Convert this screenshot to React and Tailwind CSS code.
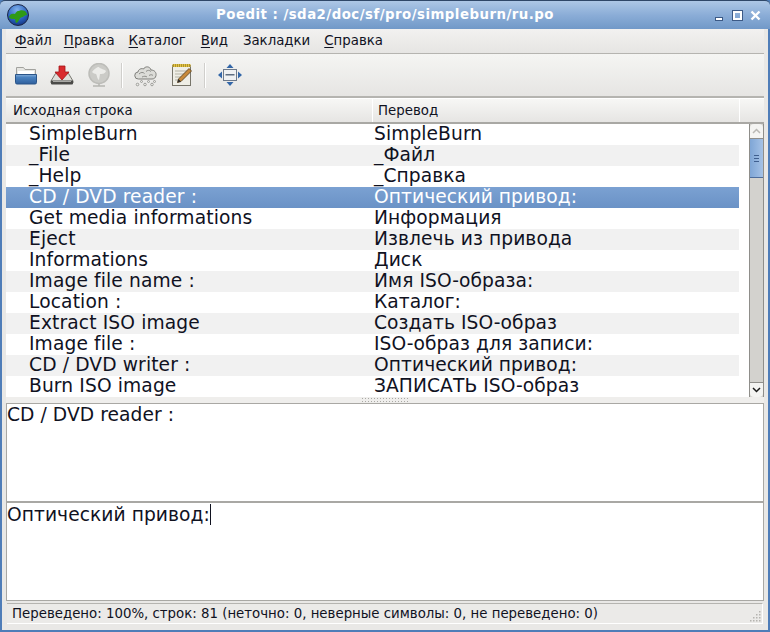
import React from 'react';

const rows = [
  ['SimpleBurn', 'SimpleBurn'],
  ['_File', '_Файл'],
  ['_Help', '_Справка'],
  ['CD / DVD reader :', 'Оптический привод:'],
  ['Get media informations', 'Информация'],
  ['Eject', 'Извлечь из привода'],
  ['Informations', 'Диск'],
  ['Image file name :', 'Имя ISO-образа:'],
  ['Location :', 'Каталог:'],
  ['Extract ISO image', 'Создать ISO-образ'],
  ['Image file :', 'ISO-образ для записи:'],
  ['CD / DVD writer :', 'Оптический привод:'],
  ['Burn ISO image', 'ЗАПИСАТЬ ISO-образ'],
];

const menus = [
  ['Ф', 'айл', ''],
  ['П', 'равка', 'ml-[12px]'],
  ['К', 'аталог', 'ml-[14px]'],
  ['В', 'ид', 'ml-[15px]'],
  ['', 'Закладки', 'ml-[15px]'],
  ['С', 'правка', 'ml-[14px]'],
];

const Globe = () => (
  <svg width="24" height="24" viewBox="0 0 24 24">
    <defs>
      <radialGradient id="sea" cx="45%" cy="25%" r="80%">
        <stop offset="0" stopColor="#7fb0ea" />
        <stop offset="0.6" stopColor="#2a62c0" />
        <stop offset="1" stopColor="#122f78" />
      </radialGradient>
    </defs>
    <circle cx="12" cy="12" r="10.500" fill="url(#sea)" stroke="#1b2748" />
    <path d="M3 14c1-3 3-4 6-3 1-1 1-3 4-3 1-1 4-1 6 0 1 1 2 2 2 4-2 0-3 1-4 2-2 0-3 1-4 3-1 2-2 3-3 3-1-2 0-4-2-4-2 0-4 0-5-2z" fill="#2f9a16" />
  </svg>
);

const FolderIcon = () => (
  <svg width="24" height="24" viewBox="0 0 24 24">
    <defs>
      <linearGradient id="fold" x1="0" y1="0" x2="0" y2="1">
        <stop offset="0" stopColor="#86aed8" />
        <stop offset="0.3" stopColor="#4a82c0" />
        <stop offset="1" stopColor="#2f5f9c" />
      </linearGradient>
    </defs>
    <path d="M2.500 4.500h7l1.500 2h10.500v6h-19z" fill="#e6e6e2" stroke="#a2a29e" />
    <rect x="4" y="8" width="16" height="4" fill="#ffffff" />
    <path d="M1.500 11.500h21v8a1.500 1.500 0 0 1-1.500 1.500H3a1.500 1.500 0 0 1-1.500-1.500z" fill="url(#fold)" stroke="#2a5488" />
  </svg>
);

const SaveIcon = () => (
  <svg width="24" height="24" viewBox="0 0 24 24">
    <path d="M5.500 10.500h13l4.500 7.500v2H1v-2z" fill="#dededa" stroke="#77776f" />
    <path d="M1 17.500h22v3a1 1 0 0 1-1 1H2a1 1 0 0 1-1-1z" fill="#4a4a48" />
    <path d="M3 18.500h18" stroke="#a9a9a5" />
    <path d="M9 3h6v6h4l-7 8-7-8h4z" fill="#d92a2e" stroke="#a31418" strokeWidth="0.800" />
  </svg>
);

const DimGlobeIcon = () => (
  <svg width="24" height="24" viewBox="0 0 24 24">
    <circle cx="12" cy="10.500" r="10" fill="#cbcbc7" stroke="#bdbdb9" strokeWidth="1.500" />
    <path d="M5 9c2-3 5-5 7-5 1 2 5 2 7 4-1 3-4 3-6 3l-1 6c-2-1-2-5-3-6-1 0-3-1-4-2z" fill="#ecece9" />
    <path d="M12 20.500v2M6 23h12" stroke="#b5b5b1" strokeWidth="1.500" />
  </svg>
);

const CloudIcon = () => (
  <svg width="24" height="24" viewBox="0 0 24 24">
    <path d="M4.500 16a3.500 3.500 0 0 1-.5-7c.5-3 3.500-4 5.500-3 1.500-3 6.500-3 7.500 1 3.500 0 5.500 2.500 5 5.500-.5 2.500-2 3.500-4 3.500z" fill="#dcdcd8" stroke="#7e7e7a" />
    <path d="M5 11c2-2 4-2 5.500-.5M12 8.500c1.500-1.500 3.500-1.500 5 0M8 14c2-1 4-1 5 0M15 12.500c1.500-1 3-1 4 0" fill="none" stroke="#8e8e8a" />
    <g fill="#ecece8" stroke="#8e8e8a" strokeWidth="0.800">
      <circle cx="3.500" cy="21.500" r="1.300" />
      <circle cx="11" cy="21.500" r="1.300" />
      <circle cx="18" cy="21.500" r="1.300" />
      <circle cx="7.500" cy="18.500" r="1" />
      <circle cx="14.500" cy="18.500" r="1" />
      <circle cx="20.500" cy="18.500" r="1" />
    </g>
  </svg>
);

const NotesIcon = () => (
  <svg width="24" height="24" viewBox="0 0 24 24">
    <rect x="2.500" y="2.500" width="18" height="20" fill="#efeee6" stroke="#77756a" />
    <path d="M2.500 1h18v3h-18z" fill="#e3c348" />
    <path d="M3.500 1v3M5.500 1v3M7.500 1v3M9.500 1v3M11.500 1v3M13.500 1v3M15.500 1v3M17.500 1v3M19.500 1v3" stroke="#96801e" strokeWidth="0.700" />
    <path d="M5 8h13M5 11h11M5 14h7M5 17h5" stroke="#b5b3a4" />
    <path d="M7.500 19.500l1-3.500L19 5.500l2.500 2.500L11 18.500z" fill="#c88a3a" stroke="#4e3a1c" strokeWidth="0.800" />
    <path d="M7.500 19.500l1-3.500 2.500 2.500z" fill="#2e2e2e" />
  </svg>
);

const FitIcon = () => (
  <svg width="24" height="24" viewBox="0 0 24 24">
    <rect x="5.500" y="6.500" width="13" height="11" fill="#eef0f2" stroke="#6d7a8c" />
    <rect x="7.500" y="11" width="9" height="1.500" fill="#5d6c80" />
    <g fill="#3366a8">
      <path d="M12 1l3.500 4h-7z" />
      <path d="M12 23l3.500-4h-7z" />
      <path d="M0 12l4-3.500v7z" />
      <path d="M24 12l-4-3.500v7z" />
    </g>
  </svg>
);

const Sep = () => <div className="mx-[10px] h-[25px] w-[2px] bg-[#d0cfcc] border-r border-white" />;

const Grip = () => (
  <div className="flex gap-[2px]">
    {Array.from({ length: 16 }).map((_, i) => (
      <span key={i} className="w-[1px] h-[1px] bg-[#aaa9a5]" />
    ))}
  </div>
);

export default function App() {
  return (
    <div className="w-[770px] h-[632px] flex flex-col overflow-hidden bg-[#4f7db8] text-[#10121f] font-['DejaVu_Sans',sans-serif]">
      {/* title bar */}
      <div className="h-[29px] shrink-0 flex items-center rounded-t-[5px] border-t border-[#2f4768] bg-gradient-to-b from-[#adc7e6] via-[#8badd7] to-[#7199c8]">
        <div className="ml-[6px]">
          <Globe />
        </div>
        <div className="flex-1 text-center text-white font-bold text-[13.33px] tracking-[0.47px] pl-[25px]">
          Poedit : /sda2/doc/sf/pro/simpleburn/ru.po
        </div>
        <div className="flex items-center mr-[9px]">
          <div className="w-[8px] h-[4px] mt-[7px] bg-white border border-[#3c5a86]" />
          <div className="ml-[10px] w-[9px] h-[9px] border-2 border-white outline outline-1 outline-[#3c5a86]" />
          <svg className="ml-[8px]" width="11" height="11" viewBox="0 0 11 11">
            <path d="M1.500 1.500l8 8M9.500 1.500l-8 8" stroke="#fff" strokeWidth="2.400" />
          </svg>
        </div>
      </div>

      {/* window body */}
      <div className="flex-1 min-h-0 mx-[2px] mb-[2px] px-[4px] flex flex-col bg-[#e9e8e6]">
        {/* menu */}
        <div className="h-[25px] shrink-0 flex items-center pl-[9px] text-[13.33px] border-b border-[#b5b4b0] bg-gradient-to-b from-[#f2f1f0] to-[#e6e5e3]">
          {menus.map(([key, rest, gap]) => (
            <span key={rest} className={gap}>
              <span className="underline underline-offset-2">{key}</span>
              {rest}
            </span>
          ))}
        </div>

        {/* toolbar */}
        <div className="h-[44px] shrink-0 flex items-center pl-[7px] border-b-2 border-[#b5b4b0] bg-gradient-to-b from-[#f5f5f3] to-[#e6e5e3]">
          <div className="w-[25px] flex justify-center"><FolderIcon /></div>
          <div className="ml-[11px] w-[25px] flex justify-center"><SaveIcon /></div>
          <div className="ml-[12px] w-[25px] flex justify-center"><DimGlobeIcon /></div>
          <Sep />
          <div className="w-[25px] flex justify-center"><CloudIcon /></div>
          <div className="ml-[11px] w-[25px] flex justify-center"><NotesIcon /></div>
          <Sep />
          <div className="ml-[1px] w-[25px] flex justify-center"><FitIcon /></div>
        </div>

        {/* list header */}
        <div className="h-[26px] shrink-0 flex text-[13.33px] border-t border-white border-b-2 border-b-[#a9a8a4] bg-gradient-to-b from-[#f7f7f5] to-[#e6e5e3]">
          <div className="w-[367px] pl-[7px] flex items-center border-r border-white">Исходная строка</div>
          <div className="w-[367px] pl-[5px] flex items-center border-r border-white">Перевод</div>
          <div className="flex-1" />
        </div>

        {/* list */}
        <div className="h-[273px] shrink-0 flex bg-white overflow-hidden">
          <div className="w-[733px] text-[18.67px]">
            {rows.map(([src, dst], i) => (
              <div
                key={i}
                className={`h-[21px] flex items-center pb-[2px] leading-[19px] ${
                  i === 3 ? 'bg-gradient-to-b from-[#7ba1d2] to-[#6a92c6] text-white' : i % 2 === 1 ? 'bg-[#f1f1f1]' : 'bg-white'
                }`}
              >
                <div className="w-[368px] pl-[23px] whitespace-nowrap tracking-[0.12px]">{src}</div>
                <div className="whitespace-nowrap tracking-[0.07px]">{dst}</div>
              </div>
            ))}
          </div>
          <div className="w-[10px]" />
          <div className="w-[15px] flex flex-col bg-[#d3d2ce] border-x border-[#8f8e8a]">
            <div className="h-[15px] flex items-center justify-center bg-[#f4f4f2] rounded-t-[4px] border-b border-[#8f8e8a]">
              <svg width="9" height="6" viewBox="0 0 9 6">
                <path d="M1 5l3.500-3.500L8 5" fill="none" stroke="#b9b8b4" strokeWidth="1.500" />
              </svg>
            </div>
            <div className="h-[39px] flex flex-col items-center justify-center gap-[2px] bg-gradient-to-r from-[#7fa6d6] to-[#a5c2e6] border-b border-[#4d6d9c]">
              <span className="w-[5px] h-[1px] bg-[#3f5f8f]" />
              <span className="w-[5px] h-[1px] bg-[#3f5f8f]" />
              <span className="w-[5px] h-[1px] bg-[#3f5f8f]" />
            </div>
            <div className="flex-1" />
            <div className="h-[15px] flex items-center justify-center bg-[#f4f4f2] rounded-b-[4px] border-t border-[#8f8e8a]">
              <svg width="9" height="6" viewBox="0 0 9 6">
                <path d="M1 1l3.500 3.500L8 1" fill="none" stroke="#1a1a1a" strokeWidth="1.500" />
              </svg>
            </div>
          </div>
        </div>

        {/* sash */}
        <div className="h-[6px] shrink-0 flex justify-center items-center bg-[#efeeec]">
          <div className="flex flex-col gap-[2px]">
            <Grip />
            <Grip />
          </div>
        </div>

        {/* source text */}
        <div className="h-[98px] shrink-0 bg-white border border-b-0 border-[#a9a8a4] text-[18.67px] leading-[22px] tracking-[0.06px]">
          CD / DVD reader :
        </div>
        <div className="h-[2px] shrink-0 bg-[#a9a8a4]" />

        {/* translation text */}
        <div className="h-[98px] shrink-0 bg-white border border-t-0 border-[#a9a8a4] pt-[1px] text-[18.67px] leading-[21px] tracking-[0.05px] flex items-start">
          <span>Оптический привод:</span>
          <span className="w-[1px] h-[21px] bg-[#10121f]" />
        </div>

        {/* status bar */}
        <div className="h-[21px] shrink-0 mt-[2px] mx-[1px] flex items-center relative pl-[5px] text-[13.33px] bg-[#ebeae8] border-t border-[#b5b4b0] border-b border-r border-b-white border-r-white">
          Переведено: 100%, строк: 81 (неточно: 0, неверные символы: 0, не переведено: 0)
          <svg className="absolute right-[1px] bottom-[1px]" width="12" height="12" viewBox="0 0 12 12" fill="#b5b4b0">
            <rect x="10" y="1" width="1.500" height="1.500" />
            <rect x="10" y="4" width="1.500" height="1.500" />
            <rect x="7" y="4" width="1.500" height="1.500" />
            <rect x="10" y="7" width="1.500" height="1.500" />
            <rect x="7" y="7" width="1.500" height="1.500" />
            <rect x="4" y="7" width="1.500" height="1.500" />
            <rect x="10" y="10" width="1.500" height="1.500" />
            <rect x="7" y="10" width="1.500" height="1.500" />
            <rect x="4" y="10" width="1.500" height="1.500" />
            <rect x="1" y="10" width="1.500" height="1.500" />
          </svg>
        </div>
      </div>
    </div>
  );
}
